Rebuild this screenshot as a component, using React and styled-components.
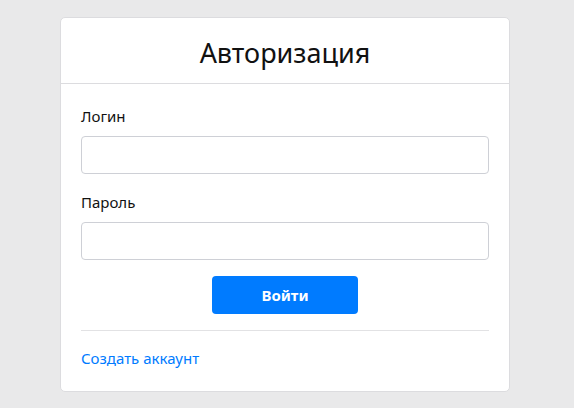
import styled, { createGlobalStyle } from 'styled-components'

const GlobalCSS = createGlobalStyle`
  * {
    margin: 0;
    padding: 0;
    box-sizing: border-box;
  }
  body {
    background: #e9e9ea;
    font-family: 'Comic Sans MS', 'Noto Sans', sans-serif;
    color: #111;
  }
`

const Page = styled.div`
  display: flex;
  justify-content: center;
  padding: 17px 4px 0 0;
  height: 408px;
`

const Card = styled.div`
  width: 450px;
  height: 375px;
  background: #fff;
  border: 1px solid #dcdcdf;
  border-radius: 5px;
  display: flex;
  flex-direction: column;
`

const Header = styled.div`
  height: 66px;
  border-bottom: 1px solid #dcdcdf;
  display: flex;
  align-items: center;
  justify-content: center;
`

const Title = styled.h1`
  font-size: 27px;
  font-weight: 400;
  padding-top: 4px;
`

const Body = styled.form`
  padding: 20px 20px 0;
  display: flex;
  flex-direction: column;
`

const Label = styled.label`
  font-size: 15px;
  line-height: 24px;
  margin-bottom: 8px;
`

const Input = styled.input`
  height: 38px;
  width: 100%;
  border: 1px solid #ced0d6;
  border-radius: 4px;
  margin-bottom: ${(p) => p.$gap || 0}px;
`

const Button = styled.button`
  align-self: center;
  width: 146px;
  height: 38px;
  margin-top: 16px;
  background: #007bff;
  color: #fff;
  border: none;
  border-radius: 4px;
  font-family: inherit;
  font-size: 15px;
  font-weight: 700;
`

const Divider = styled.hr`
  border: none;
  border-top: 1px solid #e2e2e4;
  margin: 16px 0 15px;
`

const Link = styled.a`
  color: #007bff;
  font-size: 15px;
  line-height: 24px;
  text-decoration: none;
`

export default function App() {
  return (
    <>
      <GlobalCSS />
      <Page>
        <Card>
          <Header>
            <Title>Авторизация</Title>
          </Header>
          <Body onSubmit={(e) => e.preventDefault()}>
            <Label>Логин</Label>
            <Input type="text" $gap={16} />
            <Label>Пароль</Label>
            <Input type="password" />
            <Button type="submit">Войти</Button>
            <Divider />
            <Link href="#">Создать аккаунт</Link>
          </Body>
        </Card>
      </Page>
    </>
  )
}
